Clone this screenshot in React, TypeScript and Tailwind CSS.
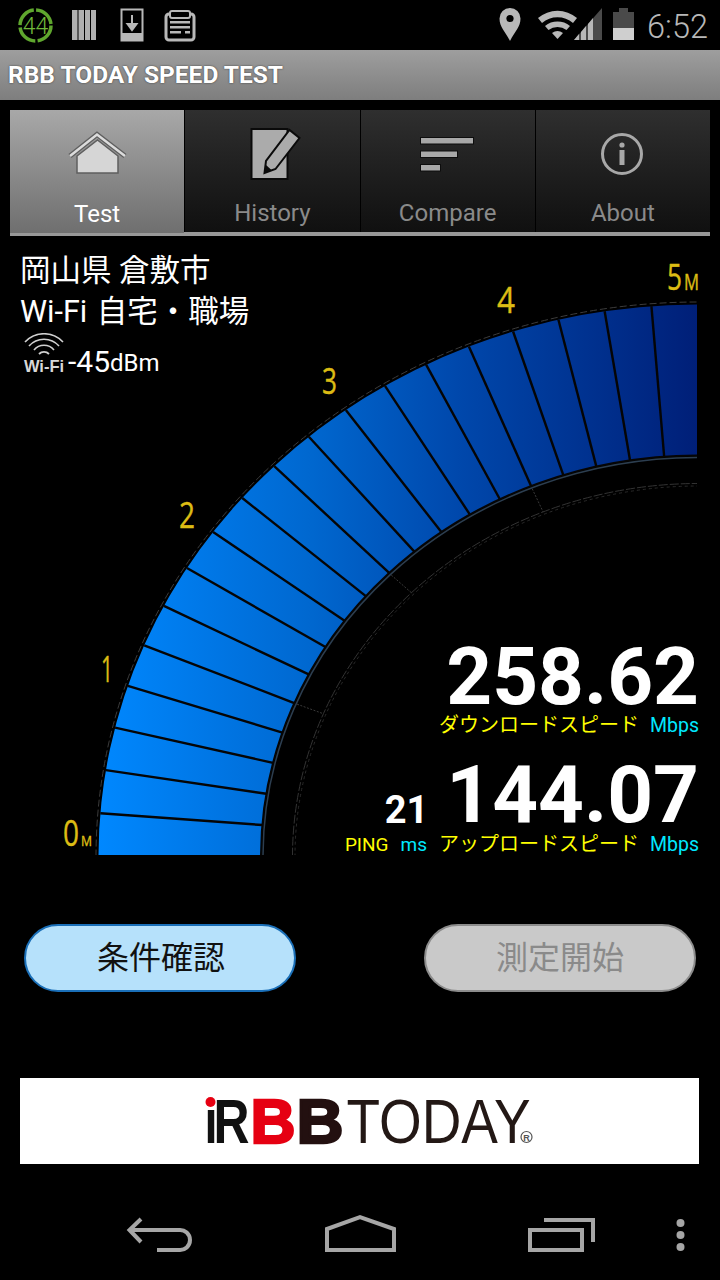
import React from "react";

const CX = 698.5;
const CY = 856.5;
const OUTER = { rx: 600, ry: 552 };
const INNER = { rx: 437.5, ry: 401 };

const pt = (r: { rx: number; ry: number }, deg: number) => {
  const t = (deg * Math.PI) / 180;
  return { x: CX - r.rx * Math.cos(t), y: CY - r.ry * Math.sin(t) };
};

const quarter = (rx: number, ry: number) =>
  `M ${CX - rx} ${CY} A ${rx} ${ry} 0 0 1 ${CX} ${CY - ry}`;

const ringPath = `${quarter(OUTER.rx, OUTER.ry)} L ${CX} ${CY - INNER.ry} A ${INNER.rx} ${INNER.ry} 0 0 0 ${CX - INNER.rx} ${CY} Z`;

const scaleLabels = [
  { text: "0", x: 63, y: 846, w: 16 },
  { text: "1", x: 101, y: 682, w: 12 },
  { text: "2", x: 179, y: 528, w: 16 },
  { text: "3", x: 322, y: 394, w: 15 },
  { text: "4", x: 497, y: 313, w: 18 },
  { text: "5", x: 667, y: 290, w: 15 },
];

function StatusBar() {
  return (
    <div className="h-[50px] shrink-0 relative">
      <svg width="720" height="50" viewBox="0 0 720 50" className="block">
        {/* battery widget */}
        <circle cx="35.5" cy="25.5" r="15.5" fill="none" stroke="#5fa62e" strokeWidth="3.5" strokeDasharray="22 2.4" />
        <text x="35.5" y="33.5" textAnchor="middle" fontSize="23" fill="#6fb83a" fontFamily="Roboto" fontWeight="300">44</text>
        {/* books */}
        <g fill="#b0b0b0">
          <rect x="72" y="10" width="5.5" height="30" />
          <rect x="78.5" y="10" width="5.5" height="30" />
          <rect x="85" y="10" width="5" height="30" />
          <rect x="91" y="10" width="5" height="30" />
        </g>
        {/* download */}
        <rect x="121.5" y="9.5" width="21" height="31" fill="none" stroke="#b8b8b8" strokeWidth="2" />
        <rect x="121" y="33" width="22" height="8" fill="#b8b8b8" />
        <path d="M132 15 V27 M127.5 24 L132 30 L136.5 24 Z" stroke="#b8b8b8" strokeWidth="2" fill="#b8b8b8" />
        {/* clipboard */}
        <rect x="166" y="14" width="28" height="26" rx="3" fill="none" stroke="#b8b8b8" strokeWidth="3" />
        <rect x="170" y="11" width="20" height="7" rx="2" fill="#000" stroke="#b8b8b8" strokeWidth="2" />
        <g fill="#b8b8b8">
          <rect x="170" y="21" width="20" height="2.5" />
          <rect x="170" y="26" width="20" height="2.5" />
          <rect x="170" y="31" width="11" height="2.5" />
          <rect x="185" y="31" width="5" height="2.5" />
        </g>
        {/* pin */}
        <path d="M510 41 C505 31 499.5 27 499.5 18.5 A10.5 10.5 0 0 1 520.5 18.5 C520.5 27 515 31 510 41 Z" fill="#b8b8b8" />
        <circle cx="510" cy="18.5" r="3.6" fill="#000" />
        {/* wifi */}
        <path d="M538 18 A30 30 0 0 1 577 18 L573 23 A24 24 0 0 0 542 23 Z" fill="#b8b8b8" />
        <path d="M545 26 A20 20 0 0 1 570 26 L566.5 30 A15 15 0 0 0 548.5 30 Z" fill="#b8b8b8" />
        <path d="M552 33 A9 9 0 0 1 563 33 L557.5 39 Z" fill="#b8b8b8" />
        {/* signal */}
        <path d="M574 40 L602 8 V40 Z" fill="#4a4a4a" />
        <g fill="#b8b8b8">
          <path d="M574 40 L579 34 V40 Z" />
          <path d="M581 32 L586 26 V40 H581 Z" />
          <path d="M588 24 L593 18 V40 H588 Z" />
        </g>
        {/* battery */}
        <rect x="613" y="12" width="21" height="16" fill="#4a4a4a" />
        <rect x="619" y="8" width="9" height="4" fill="#4a4a4a" />
        <rect x="613" y="28" width="21" height="12" fill="#cfcfcf" />
      </svg>
      <span className="absolute right-[12px] top-[7px] text-[32.5px] leading-[40px] font-light text-[#b8b8b8]">6:52</span>
    </div>
  );
}

function HomeIcon() {
  return (
    <svg width="64" height="50" viewBox="65 130 64 50">
      <path d="M77 157 L97.5 141 L118 157 V174 H77 Z" fill="#d6d6d6" stroke="#5f5f5f" strokeWidth="1.5" />
      <path d="M70 157 L97 135.5 L125 157" fill="none" stroke="#5f5f5f" strokeWidth="5" strokeLinejoin="miter" />
      <path d="M70 157 L97 135.5 L125 157" fill="none" stroke="#dcdcdc" strokeWidth="2.5" strokeLinejoin="miter" />
    </svg>
  );
}

function HistoryIcon() {
  return (
    <svg width="60" height="56" viewBox="242.5 126 60 56">
      <rect x="252" y="129" width="36" height="50" fill="#ababab" stroke="#0a0a0a" strokeWidth="2" />
      <path d="M265 173 L266.5 161 L290 130 L300 138 L276 169 Z" fill="#ababab" stroke="#0a0a0a" strokeWidth="2" />
      <path d="M265 173 L266.5 165 L272 170 Z" fill="#0a0a0a" />
    </svg>
  );
}

function CompareIcon() {
  return (
    <svg width="60" height="40" viewBox="418 134 60 40">
      <g fill="#a8a8a8" stroke="#0d0d0d" strokeWidth="1">
        <rect x="420.5" y="137.5" width="53" height="6.5" />
        <rect x="420.5" y="151" width="37" height="6.5" />
        <rect x="420.5" y="164.5" width="20" height="6.5" />
      </g>
    </svg>
  );
}

function AboutIcon() {
  return (
    <svg width="48" height="48" viewBox="599 130 48 48">
      <circle cx="622" cy="154" r="19.5" fill="none" stroke="#a8a8a8" strokeWidth="3" />
      <circle cx="622" cy="145" r="2.6" fill="#a8a8a8" />
      <rect x="619.5" y="150" width="5" height="15" fill="#a8a8a8" />
    </svg>
  );
}

const tabs = [
  { label: "Test", icon: <HomeIcon />, active: true, iconBox: "h-[50px] mt-[19px]" },
  { label: "History", icon: <HistoryIcon />, active: false, iconBox: "h-[56px] mt-[16px]" },
  { label: "Compare", icon: <CompareIcon />, active: false, iconBox: "h-[40px] mt-[24px]" },
  { label: "About", icon: <AboutIcon />, active: false, iconBox: "h-[48px] mt-[20px]" },
];

function TabBar() {
  return (
    <div className="mt-[10px] mx-[10px] h-[126px] shrink-0 flex gap-[1px] border-b-[4px] border-[#989898]">
      {tabs.map((t) => (
        <div
          key={t.label}
          className={
            t.active
              ? "flex-1 flex flex-col items-center bg-gradient-to-b from-[#a8a8a8] to-[#6f6f6f] relative -mb-[1px]"
              : "flex-1 flex flex-col items-center bg-gradient-to-b from-[#2f2f2f] to-[#101010]"
          }
        >
          <div className={t.iconBox}>{t.icon}</div>
          <div className="flex-1" />
          <span
            className={
              t.active
                ? "text-[24px] leading-[30px] mb-[4px] text-white"
                : "text-[24px] leading-[30px] mb-[4px] text-[#8a8a8a]"
            }
          >
            {t.label}
          </span>
        </div>
      ))}
    </div>
  );
}

function Gauge() {
  const ticks = Array.from({ length: 19 }, (_, i) => (i + 1) * 4.5);
  const major = [22.5, 45, 67.5];
  const rx3 = 406;
  const ry3 = 373;
  return (
    <svg width="720" height="630" viewBox="0 236 720 630" className="absolute left-0 top-0">
      <defs>
        <linearGradient id="gaugeFill" gradientUnits="userSpaceOnUse" x1="98" y1="0" x2="697" y2="0">
          <stop offset="0" stopColor="#0088ff" />
          <stop offset="0.35" stopColor="#0068d0" />
          <stop offset="0.6" stopColor="#0048ac" />
          <stop offset="1" stopColor="#001f78" />
        </linearGradient>
        <clipPath id="gaugeClip">
          <rect x="0" y="236" width="697" height="619" />
        </clipPath>
      </defs>
      <g clipPath="url(#gaugeClip)">
        <path d={ringPath} fill="url(#gaugeFill)" />
        {ticks.map((d) => {
          const a = pt(OUTER, d);
          const b = pt(INNER, d);
          return <line key={d} x1={a.x} y1={a.y} x2={b.x} y2={b.y} stroke="#050505" strokeWidth="2.4" />;
        })}
        <path d={quarter(OUTER.rx + 2.5, OUTER.ry + 2.5)} fill="none" stroke="#3c3c3c" strokeWidth="1" strokeDasharray="7 3" />
        <path d={quarter(INNER.rx, INNER.ry)} fill="none" stroke="#050505" strokeWidth="2" />
        <path d={quarter(INNER.rx - 2, INNER.ry - 2)} fill="none" stroke="#2c3e50" strokeWidth="1.5" />
        <path d={quarter(rx3, ry3)} fill="none" stroke="#333" strokeWidth="1" strokeDasharray="9 2" />
        <path d={quarter(rx3 - 2.5, ry3 - 2.5)} fill="none" stroke="#2a2a2a" strokeWidth="1" strokeDasharray="3 3" />
        {major.map((d) => {
          const a = pt({ rx: INNER.rx - 3, ry: INNER.ry - 3 }, d);
          const b = pt({ rx: rx3, ry: ry3 }, d);
          return <line key={d} x1={a.x} y1={a.y} x2={b.x} y2={b.y} stroke="#3a3a3a" strokeWidth="1" strokeDasharray="2 1.5" />;
        })}
      </g>
      <g fill="#dcbc14" stroke="#dcbc14" strokeWidth="0.4" fontFamily="Open Sans">
        {scaleLabels.map((l) => (
          <text key={l.text} x={l.x} y={l.y} fontSize="36" textLength={l.w} lengthAdjust="spacingAndGlyphs">
            {l.text}
          </text>
        ))}
        <text x="81" y="846" fontSize="14" textLength="11" lengthAdjust="spacingAndGlyphs">M</text>
        <text x="684" y="290" fontSize="21" textLength="15" lengthAdjust="spacingAndGlyphs">M</text>
      </g>
    </svg>
  );
}

function WifiMark() {
  return (
    <div className="w-[40px] flex flex-col items-center">
      <svg width="40" height="26" viewBox="0 0 40 26" className="block">
        <g fill="none" stroke="#d0d0d0">
          <path d="M1 9 A26 26 0 0 1 39 9" strokeWidth="1.6" />
          <path d="M5 13 A20 20 0 0 1 35 13" strokeWidth="1.6" />
          <path d="M10 17 A13 13 0 0 1 30 17" strokeWidth="1.6" />
          <path d="M15 21 A7 7 0 0 1 25 21" strokeWidth="1.8" />
        </g>
      </svg>
      <span className="text-[16.5px] leading-[16px] font-bold text-[#d8d8d8] font-['Liberation_Sans',sans-serif] -mt-[1px] whitespace-nowrap">Wi-Fi</span>
    </div>
  );
}

function GaugeSection() {
  return (
    <div className="relative h-[630px] shrink-0 flex flex-col">
      <Gauge />
      <div className="relative pl-[20px] pt-[14px] text-white text-[30.5px] leading-[41px]">
        <div>岡山県 倉敷市</div>
        <div className="[word-spacing:2px]">Wi-Fi 自宅・職場</div>
        <div className="flex items-end pl-[4px] mt-[1px]">
          <WifiMark />
          <span className="ml-[4px] text-[30px] leading-[24px]">-45</span>
          <span className="text-[24px] leading-[22px]">dBm</span>
        </div>
      </div>
      <div className="relative mt-auto mb-[10px] pr-[21px] flex flex-col items-end">
        <div className="text-[80px] leading-[78px] font-bold text-white">258.62</div>
        <div className="flex items-baseline text-[20px] leading-[24px] h-[24px] -mt-[3px]">
          <span className="text-[#ffff00]">ダウンロードスピード</span>
          <span className="ml-[11px] text-[19.5px] text-[#00e8ff]">Mbps</span>
        </div>
        <div className="flex items-end mt-[19px] -mb-[2px]">
          <span className="text-[38px] leading-[44px] mb-[2px] font-bold text-white mr-[18px]">21</span>
          <span className="text-[80px] leading-[78px] font-bold text-white">144.07</span>
        </div>
        <div className="flex items-baseline text-[20px] leading-[24px] h-[24px]">
          <span className="text-[19px] text-[#ffff00]">PING</span>
          <span className="ml-[12px] text-[19px] text-[#00e8ff]">ms</span>
          <span className="ml-[12px] text-[#ffff00]">アップロードスピード</span>
          <span className="ml-[11px] text-[19.5px] text-[#00e8ff]">Mbps</span>
        </div>
      </div>
    </div>
  );
}

function Buttons() {
  return (
    <div className="mt-[58px] px-[24px] flex justify-between shrink-0">
      <div className="w-[272px] h-[68px] rounded-[34px] bg-[#b6e1fb] border-2 border-[#1a6fb8] flex items-center justify-center pl-[2px] text-[32px] text-[#111]">
        条件確認
      </div>
      <div className="w-[272px] h-[68px] rounded-[34px] bg-[#c9c9c9] border-2 border-[#8c8c8c] flex items-center justify-center text-[32px] text-[#8a8a8a]">
        測定開始
      </div>
    </div>
  );
}

function Banner() {
  return (
    <div className="mt-[86px] mx-[20px] h-[86px] w-[679px] bg-white flex justify-center shrink-0">
      <svg width="350" height="86" viewBox="184.5 1078 350 86" className="block">
        <g fontFamily="Liberation Sans" fontWeight="700">
          <circle cx="210" cy="1102" r="5" fill="#e60012" />
          <text x="204" y="1143" fontSize="63" fill="#111" textLength="13" lengthAdjust="spacingAndGlyphs">ı</text>
          <text x="213" y="1143" fontSize="63" fill="#111" textLength="36" lengthAdjust="spacingAndGlyphs">R</text>
          <text x="250" y="1143" fontSize="63" fill="#e60012" stroke="#e60012" strokeWidth="2.5" textLength="45" lengthAdjust="spacingAndGlyphs">B</text>
          <text x="296" y="1143" fontSize="63" fill="#231010" stroke="#231010" strokeWidth="2.5" textLength="47" lengthAdjust="spacingAndGlyphs">B</text>
        </g>
        <text x="346" y="1143" fontSize="63" fill="#231815" fontFamily="Liberation Sans" textLength="184" lengthAdjust="spacingAndGlyphs">TODAY</text>
        <circle cx="526" cy="1137" r="5.5" fill="#fff" stroke="#555" strokeWidth="1.2" />
        <text x="526" y="1140.5" fontSize="9" fontWeight="700" textAnchor="middle" fill="#555" fontFamily="Liberation Sans">R</text>
      </svg>
    </div>
  );
}

function NavBar() {
  return (
    <div className="mt-auto h-[116px] shrink-0">
      <svg width="720" height="116" viewBox="0 1164 720 116" className="block">
        <g fill="none" stroke="#a6a6a6" strokeWidth="4">
          <path d="M141 1219 L129.5 1230 L141 1242" />
          <path d="M129 1230 H179 A10 10 0 0 1 190 1240 A10 10 0 0 1 179 1250 H157" />
          <path d="M327 1250 V1229 L360 1217 L394 1229 V1250 Z" />
          <rect x="530" y="1230" width="52" height="20" />
          <path d="M544 1220 H593 V1242" />
        </g>
        <g fill="#a6a6a6">
          <circle cx="680.5" cy="1223" r="4" />
          <circle cx="680.5" cy="1235" r="4" />
          <circle cx="680.5" cy="1247" r="4" />
        </g>
      </svg>
    </div>
  );
}

export default function App() {
  return (
    <div className="w-[720px] h-[1280px] bg-black overflow-hidden flex flex-col font-['Roboto','Noto_Sans_CJK_JP',sans-serif]">
      <StatusBar />
      <div className="h-[50px] shrink-0 bg-gradient-to-b from-[#9e9e9e] to-[#7e7e7e] flex items-center pl-[8px]">
        <span className="text-[24.5px] font-bold text-white [text-shadow:0_0_2px_#333]">RBB TODAY SPEED TEST</span>
      </div>
      <TabBar />
      <GaugeSection />
      <Buttons />
      <Banner />
      <NavBar />
    </div>
  );
}
